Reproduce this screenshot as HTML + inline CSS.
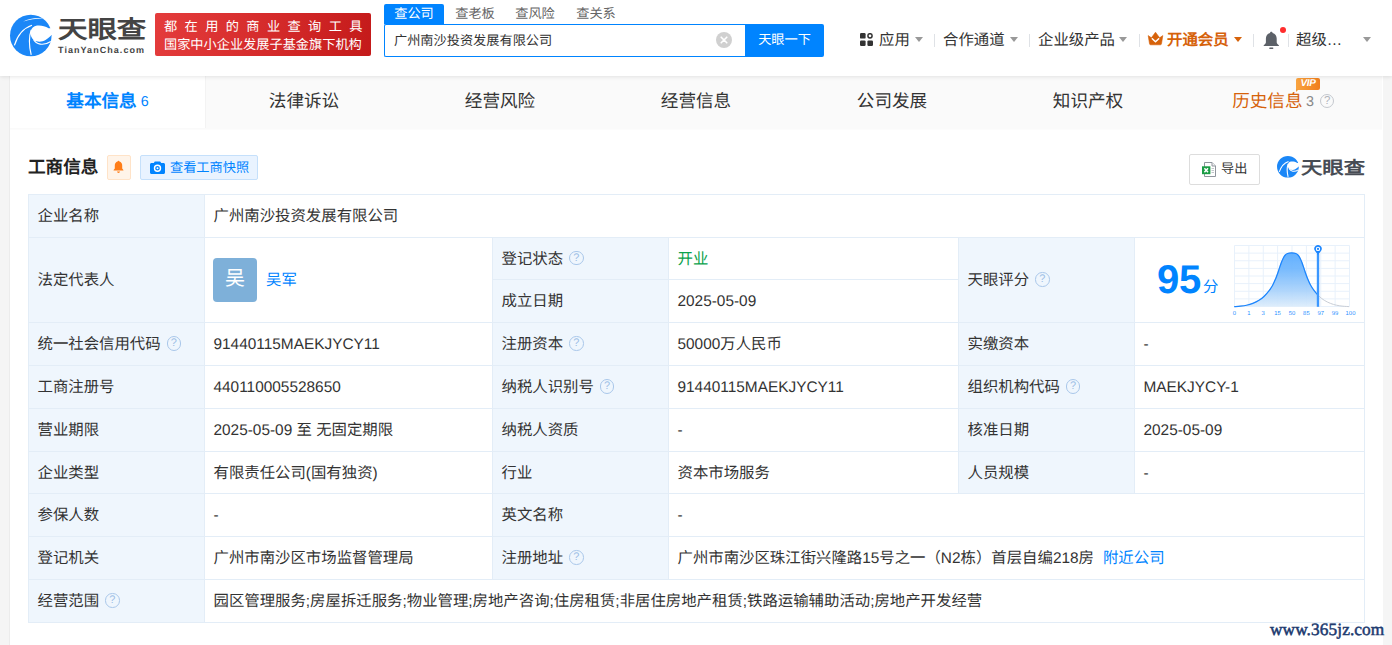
<!DOCTYPE html>
<html lang="zh-CN">
<head>
<meta charset="utf-8">
<title>天眼查</title>
<style>
*{box-sizing:border-box;margin:0;padding:0}
html,body{width:1392px;height:645px;overflow:hidden}
body{text-rendering:geometricPrecision;font-family:"Liberation Sans",sans-serif;background:#f5f5f5;color:#333;position:relative;font-size:15px}
.abs{position:absolute;white-space:nowrap}
#hdr{position:absolute;left:0;top:0;width:1392px;height:76px;background:#fff;box-shadow:0 1px 4px rgba(0,0,0,.10);z-index:5}
#main{position:absolute;left:9px;top:76px;width:1374px;height:569px;background:#fff;border-left:1px solid #ececec}
#tabs{position:absolute;left:0;top:0;width:1372px;height:54px;background:#fafafa;border-bottom:1px solid #fcfcfc}
.tab{position:absolute;top:0;height:52px;width:196px;text-align:center;line-height:50px;font-size:17.6px;color:#333;white-space:nowrap}
.tab.on{background:#fff;color:#0084ff;font-weight:bold;border-right:1px solid #f3f3f3}
.tab small{font-size:14.3px;font-weight:normal;position:relative;top:-1px;margin-left:4px}
/* header */
.banner{left:155px;top:13px;width:216px;height:43px;border-radius:2px;background:linear-gradient(100deg,#e43c3c 0%,#d42a2a 55%,#c41a1a 100%);color:#fff;font-size:13.2px;line-height:18px;padding:5px 0 0 9px;overflow:hidden}
.banner div{white-space:nowrap;height:18px}
.stab{top:4px;height:20px;line-height:19px;font-size:13.2px;color:#666;text-align:center}
.stab.on{background:#0084ff;color:#fff;border-radius:2px 2px 0 0}
.sinput{left:384px;top:24px;width:362px;height:33px;border:1px solid #0084ff;border-right:none;border-radius:2px 0 0 2px;background:#fff;font-size:13.2px;line-height:31px;padding-left:9px;color:#333}
.sbtn{left:745px;top:24px;width:79px;height:33px;background:#0084ff;color:#fff;font-size:13.2px;line-height:32px;text-align:center;border-radius:0 2px 2px 0}
.nav{top:31px;font-size:15.4px;line-height:20px;color:#333}
.sep{top:34px;width:1px;height:13px;background:#dfe2e6}
.caret{width:0;height:0;border-left:4px solid transparent;border-right:4px solid transparent;border-top:5px solid #999}
/* section */
.h2{left:18px;top:79px;font-size:17.6px;font-weight:bold;line-height:24px;color:#222}
/* table */
#tb{position:absolute;left:18px;top:118px;width:1337px;height:429px;border-top:1px solid #e3edf7;border-left:1px solid #e3edf7}
.c{position:absolute;border-right:1px solid #e3edf7;border-bottom:1px solid #e3edf7;font-size:15.4px;line-height:20px;color:#333;white-space:nowrap;padding:2px 0 0 8.5px;display:flex;align-items:center;overflow:hidden}
.c.l{background:#eff6fd}
.av{display:inline-block;width:44px;height:44px;border-radius:4px;background:#7eb0d9;color:#fff;font-size:20px;line-height:42px;text-align:center;flex:none;margin:-2px 0 0 -.5px}
.q{display:inline-block;width:14.500px;height:14.500px;border:1.200px solid #a9c7ea;border-radius:50%;color:#9bbde5;font-size:11px;line-height:12.500px;text-align:center;margin-left:6px;flex:none;position:relative;top:-1.500px}
a{color:#0084ff;text-decoration:none}
</style>
</head>
<body>
<div id="hdr">
  <!-- logo -->
  <svg class="abs" style="left:8px;top:13px" width="46" height="46" viewBox="8 13 46 46">
    <circle cx="30.8" cy="35.500" r="20.8" fill="#1b87f7"/>
    <path d="M53 28.200L48.600 28.200C45 26 41 25.200 37 25.600C33.500 26.200 31.300 28.200 30.700 31.500C30.300 35 31.300 38.200 34 40.200C37.500 42.300 42 42 45.500 40C48 38.500 50 36.800 51.600 35L54 35Z" fill="#fff"/>
    <path d="M14.400 45.400C17 37 22.500 28.500 32 25.300" fill="none" stroke="#fff" stroke-width="1.2"/>
    <path d="M31.200 54.800C29 46 28.800 37 31.200 30" fill="none" stroke="#fff" stroke-width="1.2"/>
    <path d="M33.500 39.500C36 44 43 46.500 50.800 41.500" fill="none" stroke="#fff" stroke-width="1.2"/>
    <path d="M23.200 21.500C29 18.300 37 17.200 45.500 18.600C38 18.300 30 19.300 23.200 21.500Z" fill="#fff"/>
  </svg>
  <div class="abs" style="left:58px;top:16px;font-size:24.5px;font-weight:bold;line-height:30px;color:#444;transform:scaleX(1.2);transform-origin:0 0">天眼查</div>
  <div class="abs" style="left:58px;top:44px;font-size:9px;font-weight:bold;line-height:12px;color:#444;letter-spacing:1.05px">TianYanCha.com</div>
  <div class="abs banner"><div style="letter-spacing:7.4px">都在用的商业查询工具</div><div>国家中小企业发展子基金旗下机构</div></div>
  <!-- search -->
  <div class="abs stab on" style="left:384px;width:60px">查公司</div>
  <div class="abs stab" style="left:445px;width:60px">查老板</div>
  <div class="abs stab" style="left:505px;width:60px">查风险</div>
  <div class="abs stab" style="left:566px;width:60px">查关系</div>
  <div class="abs sinput">广州南沙投资发展有限公司</div>
  <svg class="abs" style="left:716px;top:32px" width="16" height="16" viewBox="0 0 16 16"><circle cx="8" cy="8" r="8" fill="#d0d0d0"/><path d="M5.2 5.2l5.6 5.6M10.8 5.2l-5.6 5.6" stroke="#fff" stroke-width="1.6" stroke-linecap="round"/></svg>
  <div class="abs sbtn">天眼一下</div>
  <!-- nav -->
  <svg class="abs" style="left:860px;top:33px" width="13" height="13" viewBox="0 0 13 13"><rect x="0" y="0" width="5.6" height="5.6" rx="1.2" fill="#333"/><circle cx="10" cy="2.8" r="2.1" fill="none" stroke="#333" stroke-width="1.5"/><rect x="0" y="7.4" width="5.6" height="5.6" rx="1.2" fill="#333"/><rect x="7.4" y="7.4" width="5.6" height="5.6" rx="1.2" fill="#333"/></svg>
  <div class="abs nav" style="left:879px">应用</div>
  <div class="abs caret" style="left:915px;top:37px"></div>
  <div class="abs sep" style="left:934px"></div>
  <div class="abs nav" style="left:943px">合作通道</div>
  <div class="abs caret" style="left:1010px;top:37px"></div>
  <div class="abs sep" style="left:1029px"></div>
  <div class="abs nav" style="left:1038px">企业级产品</div>
  <div class="abs caret" style="left:1119px;top:37px"></div>
  <div class="abs sep" style="left:1139px"></div>
  <svg class="abs" style="left:1147px;top:31px" width="17" height="15" viewBox="1147 31 17 15"><path d="M1148.200 35.600L1151.400 37.800L1155.500 32.200L1159.600 37.800L1162.800 35.600L1161.500 43.700C1161.400 44.400 1161 44.800 1160.300 44.800L1150.700 44.800C1150 44.800 1149.600 44.400 1149.500 43.700Z" fill="#d6620a" stroke="#d6620a" stroke-width=".6" stroke-linejoin="round"/><path d="M1152.300 38.700L1155.500 41.800L1158.700 38.700" fill="none" stroke="#fff" stroke-width="1.500" stroke-linecap="round" stroke-linejoin="round"/></svg>
  <div class="abs nav" style="left:1167px;color:#d6620a;font-weight:bold">开通会员</div>
  <div class="abs caret" style="left:1234px;top:37px;border-top-color:#d6620a"></div>
  <div class="abs sep" style="left:1253px"></div>
  <svg class="abs" style="left:1262px;top:30px" width="19" height="21" viewBox="1262 30 19 21"><path d="M1271.300 31.800C1272 31.800 1272.500 32.200 1272.600 32.900C1275.200 33.600 1276.700 35.800 1276.700 38.600L1276.700 42.300C1276.700 43.300 1277.500 44.200 1278.900 45.200L1278.900 46L1263.700 46L1263.700 45.200C1265.100 44.200 1265.900 43.300 1265.900 42.300L1265.900 38.600C1265.900 35.800 1267.400 33.600 1270 32.900C1270.100 32.200 1270.600 31.800 1271.300 31.800Z" fill="#5c6168"/><rect x="1269.200" y="47.500" width="4.200" height="1.400" rx=".7" fill="#5c6168"/></svg>
  <div class="abs" style="left:1279.700px;top:27.100px;width:6.400px;height:6.400px;border-radius:50%;background:#ff2d2d"></div>
  <div class="abs sep" style="left:1288px"></div>
  <div class="abs nav" style="left:1296px">超级…</div>
  <div class="abs caret" style="left:1363px;top:37px"></div>
</div>

<div id="main">
  <div id="tabs">
    <div class="tab on" style="left:0;width:196px">基本信息<small>6</small></div>
    <div class="tab" style="left:196px">法律诉讼</div>
    <div class="tab" style="left:392px">经营风险</div>
    <div class="tab" style="left:588px">经营信息</div>
    <div class="tab" style="left:784px">公司发展</div>
    <div class="tab" style="left:980px">知识产权</div>
    <div class="tab" style="left:1175.3px;color:#d6620a">历史信息<small style="color:#888;font-size:14.3px;top:-1px;margin-left:3.5px">3</small><span class="q" style="border:1.500px solid #c4c8ce;color:#b0b4ba;margin-left:6px;position:relative;top:-3.500px;font-size:11.500px;line-height:12px">?</span></div>
    <div class="abs" style="left:1286px;top:2px;width:24px;height:12px;background:linear-gradient(90deg,#f9a440,#f07e1c);border-radius:2px 2px 2px 0;color:#fff;font-size:10px;font-weight:bold;font-style:italic;line-height:12px;text-align:center;letter-spacing:-.3px">VIP</div>
    <div class="abs" style="left:1286px;top:13px;width:0;height:0;border-top:3px solid #f39a3a;border-right:3px solid transparent"></div>
  </div>
  <div class="abs h2">工商信息</div>
  <div class="abs" style="left:97px;top:79px;width:24px;height:25px;background:#fff4e9;border:1px solid #ffe3c8;border-radius:2px"></div>
  <svg class="abs" style="left:102px;top:84px" width="13" height="14" viewBox="0 0 13 14"><path d="M6.500 0.800c.5 0 .900.300.900.800 1.800.500 2.800 2 2.800 3.900v3l1.200 1.500v.600H1.600v-.6l1.200-1.500v-3c0-1.900 1-3.400 2.800-3.900 0-.5.400-.8.900-.8z" fill="#ff7d18"/><path d="M5 11.600h3c-.1.800-.7 1.300-1.500 1.300S5.100 12.400 5 11.600z" fill="#ff7d18"/></svg>
  <div class="abs" style="left:130px;top:79px;width:118px;height:25px;background:#e9f3ff;border:1px solid #c5e0fb;border-radius:2px;color:#0084ff;font-size:13.2px;line-height:24px;padding-left:29px">查看工商快照</div>
  <svg class="abs" style="left:140px;top:85px" width="15" height="13" viewBox="0 0 15 13"><path d="M1.500 2h2.300l1-1.500h5.400l1 1.500h2.300c.8 0 1.500.700 1.500 1.500v8c0 .8-.7 1.500-1.500 1.500h-12C.700 13 0 12.300 0 11.500v-8C0 2.700.700 2 1.500 2z" fill="#0084ff"/><circle cx="7.500" cy="7.300" r="3" fill="none" stroke="#fff" stroke-width="1.400"/><circle cx="7.500" cy="7.300" r="1" fill="#fff"/></svg>
  <div class="abs" style="left:1179px;top:78px;width:71px;height:31px;border:1px solid #ddd;border-radius:2px;background:#fff;font-size:13.2px;line-height:28px;padding-left:31px;color:#333">导出</div>
  <svg class="abs" style="left:1192px;top:85px" width="15" height="17" viewBox="0 0 15 17"><path d="M2.500 1.500h7.500l3.500 3.500v10.500H2.500z" fill="#fff" stroke="#8f959d" stroke-width="1"/><path d="M10 1.500v3.500h3.500" fill="#f4f4f4" stroke="#8f959d" stroke-width="1"/><path d="M9.500 7.500h2.500M9.500 9.500h2.500M9.500 11.500h2.500" stroke="#c3c6cb" stroke-width="1.200"/><rect x="0" y="5.300" width="8.400" height="7.900" fill="#1a9c44"/><path d="M2.400 7.200l3.600 4.100M6 7.200l-3.600 4.100" stroke="#fff" stroke-width="1.500"/></svg>
  <svg class="abs" style="left:1266px;top:79.200px" width="24" height="24" viewBox="8 13 46 46">
    <circle cx="30.8" cy="35.500" r="20.8" fill="#1b87f7"/>
    <path d="M53 28.200L48.600 28.200C45 26 41 25.200 37 25.600C33.500 26.200 31.300 28.200 30.700 31.500C30.300 35 31.300 38.200 34 40.200C37.500 42.300 42 42 45.500 40C48 38.500 50 36.800 51.600 35L54 35Z" fill="#fff"/>
    <path d="M14.400 45.400C17 37 22.500 28.500 32 25.300" fill="none" stroke="#fff" stroke-width="2.1"/>
    <path d="M31.200 54.800C29 46 28.800 37 31.200 30" fill="none" stroke="#fff" stroke-width="2.1"/>
    <path d="M33.500 39.500C36 44 43 46.500 50.800 41.500" fill="none" stroke="#fff" stroke-width="2.1"/>
  </svg>
  <div class="abs" style="left:1291px;top:79.800px;font-size:17.8px;font-weight:bold;line-height:24px;color:#474c54;transform:scaleX(1.2);transform-origin:0 0">天眼查</div>

  <div id="tb">
<div class="c l" style="left:0px;top:0px;width:176px;height:43px">企业名称</div>
<div class="c" style="left:176px;top:0px;width:1160px;height:43px">广州南沙投资发展有限公司</div>
<div class="c l" style="left:0px;top:43px;width:176px;height:85px">法定代表人</div>
<div class="c" style="left:176px;top:43px;width:288px;height:85px"><span class="av">吴</span><a style="margin-left:9px">吴军</a></div>
<div class="c l" style="left:464px;top:43px;width:176px;height:42px">登记状态<span class="q">?</span></div>
<div class="c" style="left:640px;top:43px;width:290px;height:42px"><span style="color:#0ba24c">开业</span></div>
<div class="c l" style="left:464px;top:85px;width:176px;height:43px">成立日期</div>
<div class="c" style="left:640px;top:85px;width:290px;height:43px">2025-05-09</div>
<div class="c l" style="left:930px;top:43px;width:176px;height:85px">天眼评分<span class="q">?</span></div>
<div class="c" style="left:1106px;top:43px;width:230px;height:85px"><span style="position:absolute;left:22px;top:19px;font-size:40px;font-weight:bold;color:#0084ff;line-height:46px;letter-spacing:-.3px">95</span><span style="position:absolute;left:68px;top:39.500px;font-size:15.4px;color:#0084ff;line-height:20px">分</span><svg style="position:absolute;left:95px;top:2px" width="132" height="82" viewBox="0 0 132 82"><defs><linearGradient id="bg" x1="0" y1="0" x2="0" y2="1"><stop offset="0" stop-color="#58abff"/><stop offset=".3" stop-color="#6fb6fd"/><stop offset=".7" stop-color="#a9d2fb"/><stop offset="1" stop-color="#dcecfb"/></linearGradient><clipPath id="cl"><rect x="0" y="0" width="88.0" height="82"/></clipPath></defs><path d="M4.50 5.5V66.5M18.88 5.5V66.5M33.25 5.5V66.5M47.62 5.5V66.5M62.00 5.5V66.5M76.38 5.5V66.5M90.75 5.5V66.5M105.12 5.5V66.5M119.50 5.5V66.5M4.5 5.50H119.5M4.5 13.12H119.5M4.5 20.75H119.5M4.5 28.38H119.5M4.5 36.00H119.5M4.5 43.62H119.5M4.5 51.25H119.5M4.5 58.88H119.5M4.5 66.50H119.5" stroke="#e8f1fb" stroke-width="1" fill="none"/><path d="M4.20 66.63C5.24 66.55 8.34 66.42 10.41 66.19C12.47 65.96 14.54 65.73 16.61 65.26C18.68 64.80 20.75 64.23 22.81 63.40C24.88 62.57 27.16 61.46 29.02 60.30C30.88 59.14 32.33 58.02 33.98 56.45C35.63 54.88 37.50 52.73 38.94 50.87C40.39 49.01 41.53 47.35 42.67 45.29C43.80 43.22 44.94 40.43 45.77 38.46C46.59 36.50 47.01 35.26 47.63 33.50C48.25 31.74 48.87 29.74 49.49 27.92C50.11 26.10 50.73 24.19 51.35 22.58C51.97 20.97 52.59 19.46 53.21 18.24C53.83 17.02 54.35 16.05 55.07 15.26C55.80 14.47 56.46 13.92 57.55 13.52C58.65 13.13 60.28 12.90 61.65 12.90C63.01 12.90 64.65 13.13 65.74 13.52C66.84 13.92 67.50 14.47 68.22 15.26C68.95 16.05 69.46 17.02 70.08 18.24C70.70 19.46 71.33 20.97 71.95 22.58C72.57 24.19 73.19 26.10 73.81 27.92C74.43 29.74 75.05 31.74 75.67 33.50C76.29 35.26 76.70 36.50 77.53 38.46C78.36 40.43 79.49 43.22 80.63 45.29C81.77 47.35 82.90 49.01 84.35 50.87C85.80 52.73 87.66 54.88 89.32 56.45C90.97 58.02 92.42 59.14 94.28 60.30C96.14 61.46 98.41 62.57 100.48 63.40C102.55 64.23 104.62 64.80 106.68 65.26C108.75 65.73 110.82 65.96 112.89 66.19C114.96 66.42 118.06 66.55 119.09 66.63" stroke="#c9ced6" stroke-width="1" fill="none"/><g clip-path="url(#cl)"><path d="M4.20 66.63C5.24 66.55 8.34 66.42 10.41 66.19C12.47 65.96 14.54 65.73 16.61 65.26C18.68 64.80 20.75 64.23 22.81 63.40C24.88 62.57 27.16 61.46 29.02 60.30C30.88 59.14 32.33 58.02 33.98 56.45C35.63 54.88 37.50 52.73 38.94 50.87C40.39 49.01 41.53 47.35 42.67 45.29C43.80 43.22 44.94 40.43 45.77 38.46C46.59 36.50 47.01 35.26 47.63 33.50C48.25 31.74 48.87 29.74 49.49 27.92C50.11 26.10 50.73 24.19 51.35 22.58C51.97 20.97 52.59 19.46 53.21 18.24C53.83 17.02 54.35 16.05 55.07 15.26C55.80 14.47 56.46 13.92 57.55 13.52C58.65 13.13 60.28 12.90 61.65 12.90C63.01 12.90 64.65 13.13 65.74 13.52C66.84 13.92 67.50 14.47 68.22 15.26C68.95 16.05 69.46 17.02 70.08 18.24C70.70 19.46 71.33 20.97 71.95 22.58C72.57 24.19 73.19 26.10 73.81 27.92C74.43 29.74 75.05 31.74 75.67 33.50C76.29 35.26 76.70 36.50 77.53 38.46C78.36 40.43 79.49 43.22 80.63 45.29C81.77 47.35 82.90 49.01 84.35 50.87C85.80 52.73 87.66 54.88 89.32 56.45C90.97 58.02 92.42 59.14 94.28 60.30C96.14 61.46 98.41 62.57 100.48 63.40C102.55 64.23 104.62 64.80 106.68 65.26C108.75 65.73 110.82 65.96 112.89 66.19C114.96 66.42 118.06 66.55 119.09 66.63L119.09 66.60L4.20 66.60Z" fill="url(#bg)" fill-opacity=".93"/><path d="M4.20 66.63C5.24 66.55 8.34 66.42 10.41 66.19C12.47 65.96 14.54 65.73 16.61 65.26C18.68 64.80 20.75 64.23 22.81 63.40C24.88 62.57 27.16 61.46 29.02 60.30C30.88 59.14 32.33 58.02 33.98 56.45C35.63 54.88 37.50 52.73 38.94 50.87C40.39 49.01 41.53 47.35 42.67 45.29C43.80 43.22 44.94 40.43 45.77 38.46C46.59 36.50 47.01 35.26 47.63 33.50C48.25 31.74 48.87 29.74 49.49 27.92C50.11 26.10 50.73 24.19 51.35 22.58C51.97 20.97 52.59 19.46 53.21 18.24C53.83 17.02 54.35 16.05 55.07 15.26C55.80 14.47 56.46 13.92 57.55 13.52C58.65 13.13 60.28 12.90 61.65 12.90C63.01 12.90 64.65 13.13 65.74 13.52C66.84 13.92 67.50 14.47 68.22 15.26C68.95 16.05 69.46 17.02 70.08 18.24C70.70 19.46 71.33 20.97 71.95 22.58C72.57 24.19 73.19 26.10 73.81 27.92C74.43 29.74 75.05 31.74 75.67 33.50C76.29 35.26 76.70 36.50 77.53 38.46C78.36 40.43 79.49 43.22 80.63 45.29C81.77 47.35 82.90 49.01 84.35 50.87C85.80 52.73 87.66 54.88 89.32 56.45C90.97 58.02 92.42 59.14 94.28 60.30C96.14 61.46 98.41 62.57 100.48 63.40C102.55 64.23 104.62 64.80 106.68 65.26C108.75 65.73 110.82 65.96 112.89 66.19C114.96 66.42 118.06 66.55 119.09 66.63" stroke="#1a85ff" stroke-width="1.25" fill="none"/></g><path d="M88.0 14V66.8" stroke="#3b97ff" stroke-width="2.4"/><path d="M88.0 15.10L84.90 10.80A3.700 3.700 0 1 1 91.10 10.80Z" fill="#1a85ff"/><circle cx="88.0" cy="8.90" r="2.2" fill="#fff"/><circle cx="88.0" cy="8.90" r="1.100" fill="#1a85ff"/><text x="4.5" y="74.8" font-size="5.9" fill="#2a8fff" text-anchor="middle" font-family="Liberation Sans,sans-serif">0</text><text x="18.9" y="74.8" font-size="5.9" fill="#2a8fff" text-anchor="middle" font-family="Liberation Sans,sans-serif">1</text><text x="33.2" y="74.8" font-size="5.9" fill="#2a8fff" text-anchor="middle" font-family="Liberation Sans,sans-serif">3</text><text x="47.6" y="74.8" font-size="5.9" fill="#2a8fff" text-anchor="middle" font-family="Liberation Sans,sans-serif">15</text><text x="62.0" y="74.8" font-size="5.9" fill="#2a8fff" text-anchor="middle" font-family="Liberation Sans,sans-serif">50</text><text x="76.4" y="74.8" font-size="5.9" fill="#2a8fff" text-anchor="middle" font-family="Liberation Sans,sans-serif">85</text><text x="90.8" y="74.8" font-size="5.9" fill="#2a8fff" text-anchor="middle" font-family="Liberation Sans,sans-serif">97</text><text x="105.1" y="74.8" font-size="5.9" fill="#2a8fff" text-anchor="middle" font-family="Liberation Sans,sans-serif">99</text><text x="120.5" y="74.8" font-size="5.9" fill="#2a8fff" text-anchor="middle" font-family="Liberation Sans,sans-serif">100</text></svg></div>
<div class="c l" style="left:0px;top:128px;width:176px;height:43px">统一社会信用代码<span class="q">?</span></div>
<div class="c" style="left:176px;top:128px;width:288px;height:43px">91440115MAEKJYCY11</div>
<div class="c l" style="left:464px;top:128px;width:176px;height:43px">注册资本<span class="q">?</span></div>
<div class="c" style="left:640px;top:128px;width:290px;height:43px">50000万人民币</div>
<div class="c l" style="left:930px;top:128px;width:176px;height:43px">实缴资本</div>
<div class="c" style="left:1106px;top:128px;width:230px;height:43px">-</div>
<div class="c l" style="left:0px;top:171px;width:176px;height:43px">工商注册号</div>
<div class="c" style="left:176px;top:171px;width:288px;height:43px">440110005528650</div>
<div class="c l" style="left:464px;top:171px;width:176px;height:43px">纳税人识别号<span class="q">?</span></div>
<div class="c" style="left:640px;top:171px;width:290px;height:43px">91440115MAEKJYCY11</div>
<div class="c l" style="left:930px;top:171px;width:176px;height:43px">组织机构代码<span class="q">?</span></div>
<div class="c" style="left:1106px;top:171px;width:230px;height:43px">MAEKJYCY-1</div>
<div class="c l" style="left:0px;top:214px;width:176px;height:43px">营业期限</div>
<div class="c" style="left:176px;top:214px;width:288px;height:43px">2025-05-09 至 无固定期限</div>
<div class="c l" style="left:464px;top:214px;width:176px;height:43px">纳税人资质</div>
<div class="c" style="left:640px;top:214px;width:290px;height:43px">-</div>
<div class="c l" style="left:930px;top:214px;width:176px;height:43px">核准日期</div>
<div class="c" style="left:1106px;top:214px;width:230px;height:43px">2025-05-09</div>
<div class="c l" style="left:0px;top:257px;width:176px;height:42px">企业类型</div>
<div class="c" style="left:176px;top:257px;width:288px;height:42px">有限责任公司(国有独资)</div>
<div class="c l" style="left:464px;top:257px;width:176px;height:42px">行业</div>
<div class="c" style="left:640px;top:257px;width:290px;height:42px">资本市场服务</div>
<div class="c l" style="left:930px;top:257px;width:176px;height:42px">人员规模</div>
<div class="c" style="left:1106px;top:257px;width:230px;height:42px">-</div>
<div class="c l" style="left:0px;top:299px;width:176px;height:43px">参保人数</div>
<div class="c" style="left:176px;top:299px;width:288px;height:43px">-</div>
<div class="c l" style="left:464px;top:299px;width:176px;height:43px">英文名称</div>
<div class="c" style="left:640px;top:299px;width:696px;height:43px">-</div>
<div class="c l" style="left:0px;top:342px;width:176px;height:43px">登记机关</div>
<div class="c" style="left:176px;top:342px;width:288px;height:43px">广州市南沙区市场监督管理局</div>
<div class="c l" style="left:464px;top:342px;width:176px;height:43px">注册地址<span class="q">?</span></div>
<div class="c" style="left:640px;top:342px;width:696px;height:43px">广州市南沙区珠江街兴隆路15号之一（N2栋）首层自编218房<a style="margin-left:9px">附近公司</a></div>
<div class="c l" style="left:0px;top:385px;width:176px;height:43px">经营范围<span class="q">?</span></div>
<div class="c" style="left:176px;top:385px;width:1160px;height:43px">园区管理服务;房屋拆迁服务;物业管理;房地产咨询;住房租赁;非居住房地产租赁;铁路运输辅助活动;房地产开发经营</div>
</div><!--/tb-->
</div>
<div class="abs" style="left:1270px;top:619px;font-family:'Liberation Serif',serif;font-size:17.3px;line-height:22px;color:#203a6f;-webkit-text-stroke:.5px #203a6f;z-index:9;letter-spacing:.1px">www.365jz.com</div>
</body>
</html>
